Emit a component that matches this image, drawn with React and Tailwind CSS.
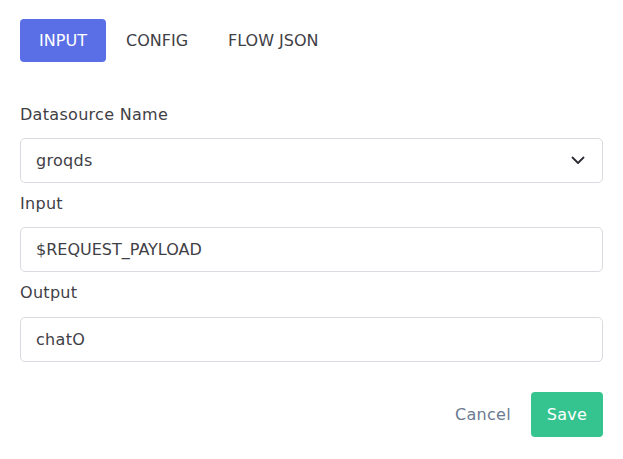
export default function App() {
  const font = { fontFamily: '"DejaVu Sans", "Liberation Sans", sans-serif' };
  return (
    <div className="w-[623px] h-[459px] bg-white text-[#3f4046]" style={font}>
      <div className="flex items-center pt-[19px] pl-[20px]">
        <button className="h-[43px] w-[86px] rounded-[4px] bg-[#5a6fe6] text-white text-[16px] font-medium">INPUT</button>
        <button className="h-[43px] px-[20px] text-[16px] font-medium text-[#3f4046]">CONFIG</button>
        <button className="h-[43px] px-[20px] text-[16px] font-medium text-[#3f4046]">FLOW JSON</button>
      </div>
      <div className="px-[20px] pt-[42px]">
        <div className="text-[16px] tracking-[0.3px] leading-[22px] mb-[12px]">Datasource Name</div>
        <div className="h-[45px] rounded-[5px] border border-[#d8dbe0] flex items-center justify-between pl-[15px] pr-[17px] text-[16px] tracking-[0.3px]">
          <span>groqds</span>
          <svg width="14" height="9" viewBox="0 0 14 9" fill="none">
            <path d="M1.5 1.5L7 7L12.5 1.5" stroke="#2b2d33" strokeWidth="1.8" strokeLinecap="round" strokeLinejoin="round" />
          </svg>
        </div>
        <div className="text-[16px] tracking-[0.3px] leading-[22px] mt-[10px] mb-[12px]">Input</div>
        <div className="h-[45px] rounded-[5px] border border-[#d8dbe0] flex items-center pl-[15px] text-[16px]">$REQUEST_PAYLOAD</div>
        <div className="text-[16px] tracking-[0.3px] leading-[22px] mt-[10px] mb-[13px]">Output</div>
        <div className="h-[45px] rounded-[5px] border border-[#d8dbe0] flex items-center pl-[15px] text-[16px] tracking-[0.3px]">chatO</div>
        <div className="flex justify-end items-center mt-[30px] gap-[20px]">
          <span className="text-[16px] tracking-[0.3px] text-[#6b7a90]">Cancel</span>
          <button className="h-[45px] w-[72px] rounded-[4px] bg-[#35c48f] text-white text-[16px] tracking-[0.3px]">Save</button>
        </div>
      </div>
    </div>
  );
}
